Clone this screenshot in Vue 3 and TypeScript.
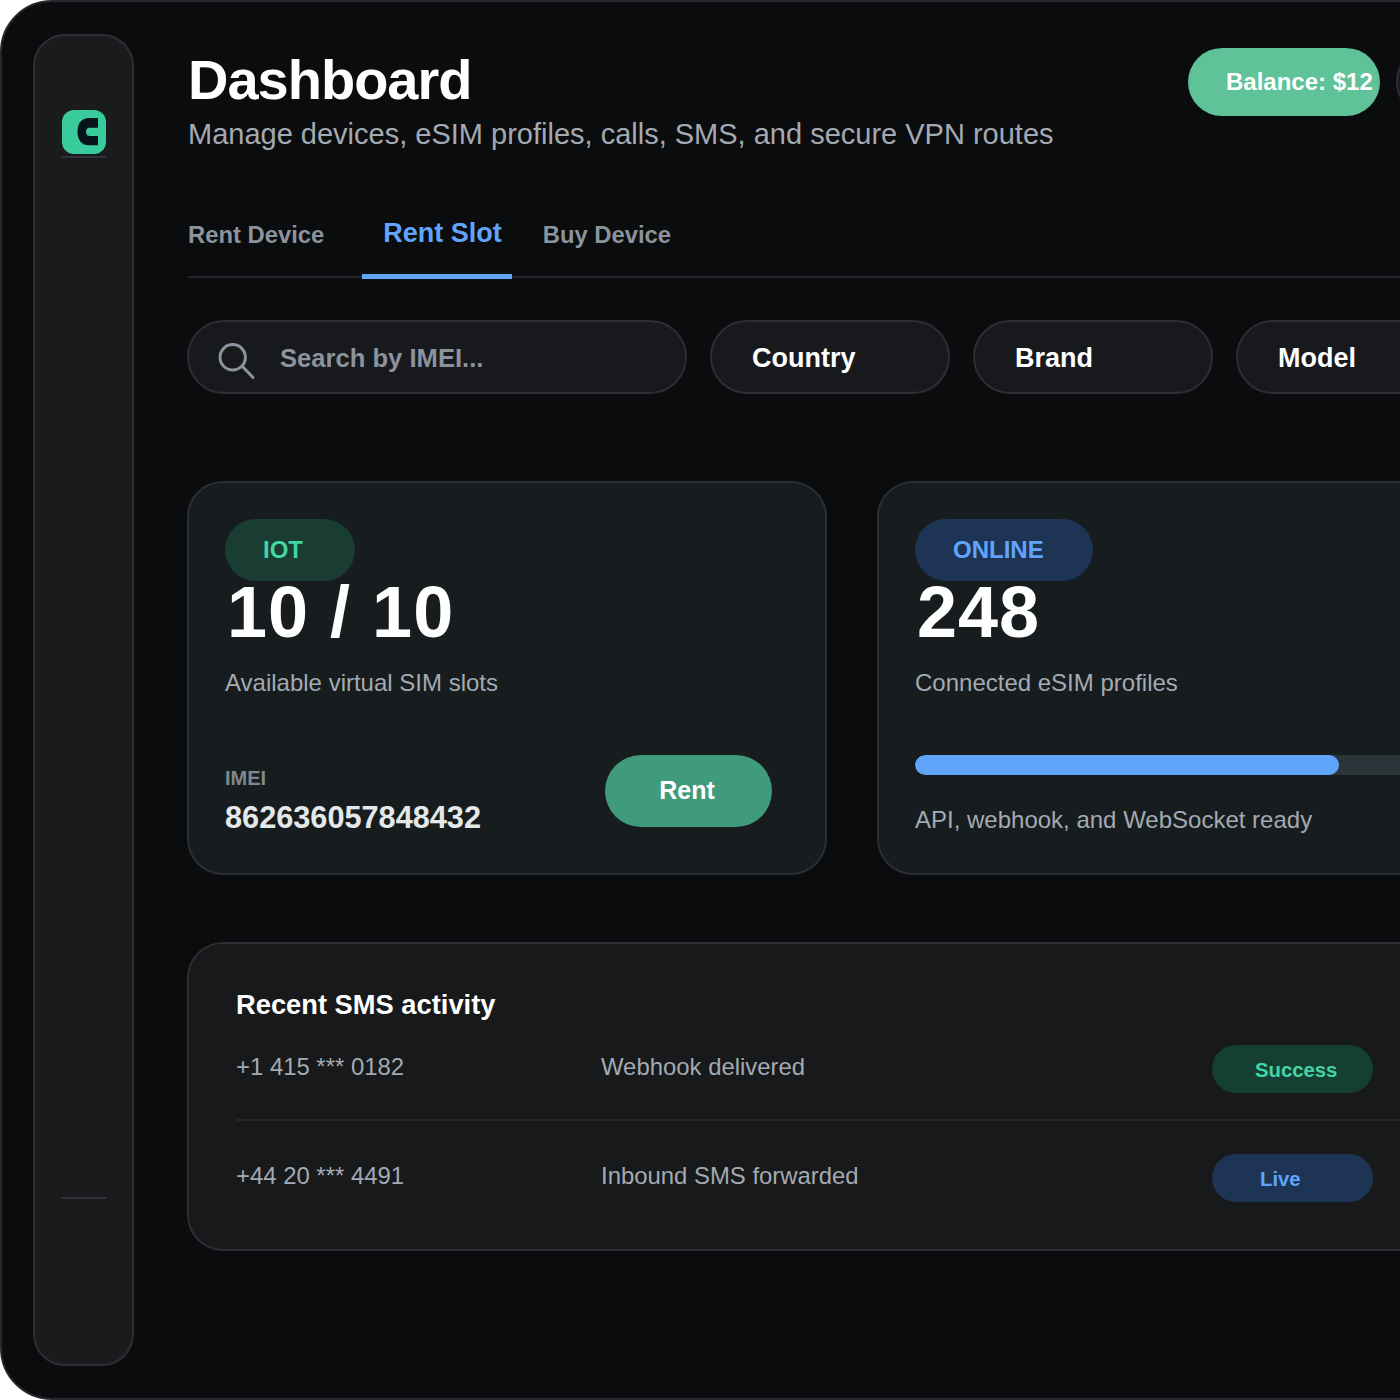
<script setup lang="ts">
interface SmsRow {
  phone: string
  message: string
  status: string
  kind: 'green' | 'blue'
}

const tabs = ['Rent Device', 'Rent Slot', 'Buy Device']
const activeTab = 'Rent Slot'
const filters = ['Country', 'Brand', 'Model']

const rows: SmsRow[] = [
  { phone: '+1 415 *** 0182', message: 'Webhook delivered', status: 'Success', kind: 'green' },
  { phone: '+44 20 *** 4491', message: 'Inbound SMS forwarded', status: 'Live', kind: 'blue' },
]
</script>

<template>
  <div class="frame">
    <aside class="sidebar">
      <div class="logo">
        <svg viewBox="0 0 44 44" width="44" height="44">
          <rect width="44" height="44" rx="12" fill="#3acb9c" />
          <path d="M36 8H27C20 8 15.500 13 15.500 21.700C15.500 30.300 20 35.300 27 35.300H36V26H27.500C25 26 24 24 24 21.800C24 19.600 25 17.700 27.500 17.700H36Z" fill="#07141c" />
        </svg>
      </div>
      <div class="side-rule"></div>
      <div class="side-rule bottom"></div>
    </aside>

    <main class="main">
      <header class="top">
        <div>
          <h1>Dashboard</h1>
          <p class="subtitle">Manage devices, eSIM profiles, calls, SMS, and secure VPN routes</p>
        </div>
        <div class="top-actions">
          <div class="balance">Balance: $12</div>
          <div class="round-btn"></div>
        </div>
      </header>

      <nav class="tabs">
        <a v-for="tab in tabs" :key="tab" class="tab" :class="{ active: tab === activeTab }">{{ tab }}</a>
      </nav>

      <div class="filters">
        <div class="search">
          <svg class="search-icon" viewBox="0 0 40 40" width="40" height="40" fill="none" stroke="#8b939c" stroke-width="3" stroke-linecap="round">
            <circle cx="16.700" cy="19.300" r="12.700" />
            <path d="M26.500 28.500L37 39.500" />
          </svg>
          <span>Search by IMEI...</span>
        </div>
        <div v-for="f in filters" :key="f" class="select">{{ f }}</div>
      </div>

      <section class="cards">
        <article class="card">
          <span class="pill green">IOT</span>
          <div class="big">10 / 10</div>
          <p class="desc">Available virtual SIM slots</p>
          <div class="card-foot">
            <div class="imei-block">
              <div class="imei-label">IMEI</div>
              <div class="imei">862636057848432</div>
            </div>
            <button class="rent">Rent</button>
          </div>
        </article>

        <article class="card">
          <span class="pill blue">ONLINE</span>
          <div class="big">248</div>
          <p class="desc">Connected eSIM profiles</p>
          <div class="progress"><div class="progress-fill"></div></div>
          <p class="desc note">API, webhook, and WebSocket ready</p>
        </article>
      </section>

      <section class="activity">
        <h2>Recent SMS activity</h2>
        <div v-for="row in rows" :key="row.phone" class="row">
          <span class="phone">{{ row.phone }}</span>
          <span class="msg">{{ row.message }}</span>
          <span class="status" :class="row.kind">{{ row.status }}</span>
        </div>
      </section>
    </main>
  </div>
</template>

<style>
html,
body {
  margin: 0;
  background: #fff;
  overflow: hidden;
}
</style>

<style scoped>
.frame {
  box-sizing: border-box;
  width: 1640px;
  height: 1400px;
  padding: 32px 0 32px 31px;
  display: flex;
  gap: 53px;
  background: #0b0c0e;
  border: 2px solid #26282d;
  border-radius: 52px;
  font-family: "Liberation Sans", Arial, sans-serif;
  color: #fff;
}

.sidebar {
  box-sizing: border-box;
  width: 101px;
  flex: none;
  padding-top: 74px;
  display: flex;
  flex-direction: column;
  align-items: center;
  background: #1a1b1d;
  border: 2px solid #2d2f34;
  border-radius: 32px;
}

.logo {
  height: 44px;
}

.side-rule {
  width: 45px;
  height: 2px;
  margin-top: 2px;
  background: #303237;
}

.side-rule.bottom {
  margin-top: auto;
  margin-bottom: 165px;
}

.main {
  width: 1340px;
  flex: none;
}

.top {
  display: flex;
  justify-content: space-between;
  align-items: flex-start;
  height: 150px;
  margin: 14px 0 0 1px;
}

h1 {
  margin: 0;
  font-size: 56px;
  line-height: 64px;
  letter-spacing: -1px;
  font-weight: 700;
}

.subtitle {
  margin: 4px 0 0;
  font-size: 29px;
  line-height: 36px;
  color: #a3aab2;
}

.top-actions {
  display: flex;
  gap: 16px;
  margin-right: 63px;
}

.balance {
  box-sizing: border-box;
  width: 192px;
  height: 68px;
  flex: none;
  padding-left: 38px;
  border-radius: 34px;
  background: #5fc298;
  font-size: 24px;
  font-weight: 700;
  line-height: 68px;
  white-space: nowrap;
}

.round-btn {
  width: 68px;
  height: 68px;
  flex: none;
  box-sizing: border-box;
  border: 2px solid #2d2f34;
  border-radius: 50%;
  background: #18191c;
}

.tabs {
  display: flex;
  align-items: flex-end;
  height: 81px;
  margin: -3px 0 0 1px;
  border-bottom: 2px solid #25272c;
}

.tab {
  font-size: 23.800px;
  font-weight: 700;
  line-height: 32px;
  padding-bottom: 25px;
  color: #8b939c;
}

.tab.active {
  margin: 0 31px -3px 38px;
  padding: 0 10px 25px 21px;
  font-size: 27px;
  color: #60a5fa;
  border-bottom: 5px solid #60a5fa;
}

.filters {
  display: flex;
  gap: 23px;
  margin-top: 42px;
}

.search,
.select {
  box-sizing: border-box;
  height: 74px;
  padding-top: 2px;
  display: flex;
  align-items: center;
  flex: none;
  background: #18191d;
  border: 2px solid #2b2e33;
  border-radius: 37px;
  font-size: 27px;
  font-weight: 700;
}

.search {
  width: 500px;
  padding-left: 27px;
  gap: 24px;
  font-size: 25.600px;
  color: #8b939c;
}

.search-icon {
  overflow: visible;
}

.select {
  width: 240px;
  padding-left: 40px;
}

.cards {
  display: flex;
  gap: 50px;
  margin-top: 87px;
}

.card {
  box-sizing: border-box;
  width: 640px;
  height: 394px;
  flex: none;
  padding: 36px;
  background: #171d1e;
  border: 2px solid #2b2e33;
  border-radius: 36px;
}

.pill {
  box-sizing: border-box;
  display: block;
  width: max-content;
  min-width: 130px;
  height: 62px;
  padding: 0 49px 0 38px;
  border-radius: 31px;
  font-size: 24px;
  font-weight: 700;
  line-height: 62px;
}

.pill.green {
  background: #193c33;
  color: #43d6a4;
}

.pill.blue {
  background: #1e3455;
  color: #60a5fa;
}

.big {
  margin-top: -1px;
  padding-left: 2px;
  font-size: 72px;
  font-weight: 700;
  letter-spacing: 1px;
  line-height: 64px;
}

.desc {
  margin: 24px 0 0;
  font-size: 24px;
  line-height: 30px;
  color: #a3aab2;
}

.card-foot {
  display: flex;
  align-items: flex-start;
  justify-content: space-between;
  margin-top: 57px;
  padding-right: 17px;
}

.imei-block {
  padding-top: 10px;
}

.imei-label {
  margin-bottom: 7px;
  font-size: 20px;
  font-weight: 700;
  line-height: 26px;
  color: #7f878f;
}

.imei {
  font-size: 30.700px;
  font-weight: 700;
  line-height: 40px;
  color: #e4e8e8;
}

.rent {
  width: 167px;
  height: 72px;
  padding: 0 3px 2px 0;
  border: 0;
  border-radius: 36px;
  background: #3f9b7c;
  color: #fff;
  font: 700 25px "Liberation Sans", Arial, sans-serif;
}

.progress {
  height: 20px;
  margin-top: 57px;
  border-radius: 10px;
  background: #2a3439;
  overflow: hidden;
}

.progress-fill {
  width: 424px;
  height: 100%;
  border-radius: 10px;
  background: #60a5fa;
}

.note {
  margin-top: 30px;
}

.activity {
  box-sizing: border-box;
  height: 309px;
  margin-top: 67px;
  padding: 45px 47px;
  background: #18191b;
  border: 2px solid #2b2e33;
  border-radius: 36px;
}

h2 {
  margin: 0 0 24px;
  font-size: 27.300px;
  line-height: 32px;
  font-weight: 700;
}

.row {
  display: flex;
  align-items: center;
  margin-right: 60px;
  padding-bottom: 26px;
  font-size: 23.900px;
  color: #a3aab2;
}

.row + .row {
  padding-top: 33px;
  border-top: 2px solid #25272c;
}

.phone,
.msg {
  padding-bottom: 4px;
}

.phone {
  width: 365px;
}

.msg {
  width: 611px;
}

.status {
  box-sizing: border-box;
  width: 161px;
  height: 48px;
  padding-left: 43px;
  border-radius: 24px;
  font-size: 20.300px;
  font-weight: 700;
  line-height: 50px;
}

.status.green {
  background: #153f33;
  color: #43d6a4;
}

.status.blue {
  padding-left: 48px;
  background: #1e3455;
  color: #60a5fa;
}
</style>
